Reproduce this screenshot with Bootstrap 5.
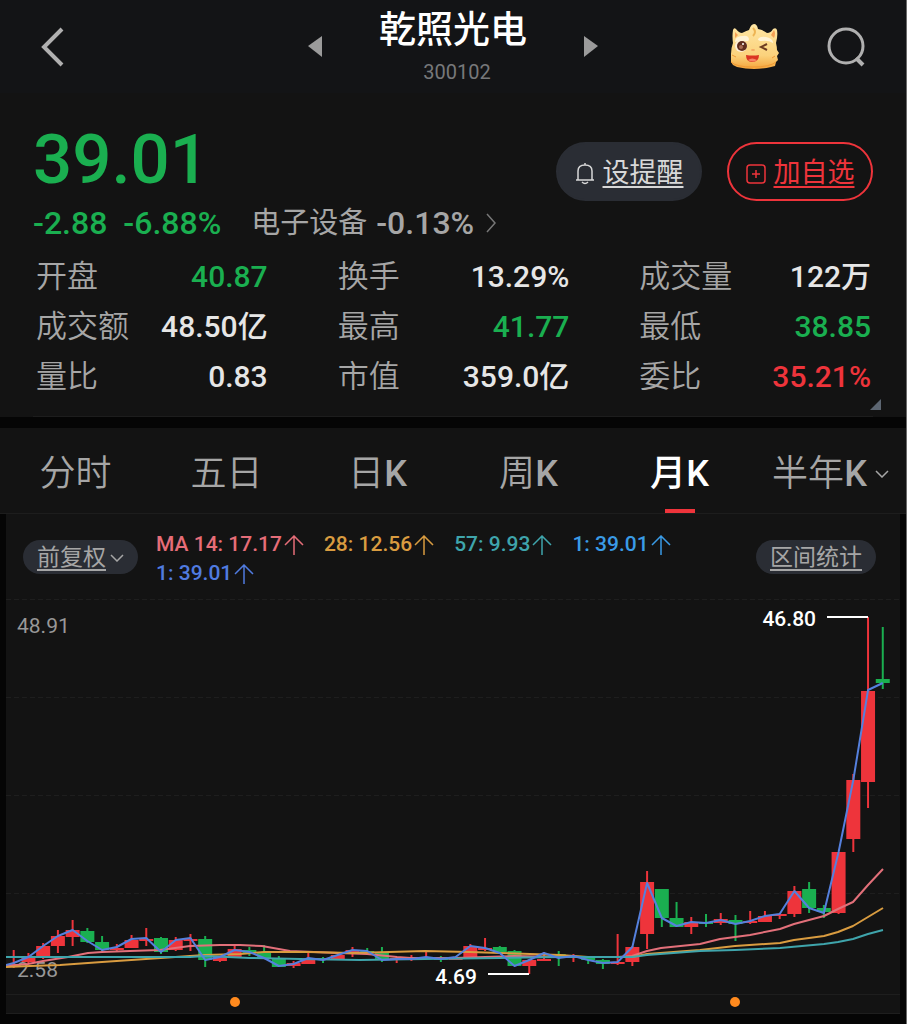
<!DOCTYPE html>
<html lang="zh-CN" data-bs-theme="dark">
<head>
<meta charset="utf-8">
<meta name="viewport" content="width=device-width, initial-scale=1">
<title>乾照光电 300102</title>
<link href="https://cdn.jsdelivr.net/npm/bootstrap@5.3.0/dist/css/bootstrap.min.css" rel="stylesheet">
<style>
  :root { --up:#ee343b; --down:#1aaf50; --muted:#a6a6a6; --panel:#131313; --pill:#2a2d34; }
  body { background:#050505; color:#e6e6e6; font-family:Roboto,"Noto Sans CJK SC",sans-serif; border-right:1px solid #6b6b6b; min-height:100vh; }
  button { color:inherit; font-family:inherit; }
  svg { display:block; }
  .plain { background:none; border:0; padding:0; }
  .up { color:var(--up); } .down { color:var(--down); }
  .topbar { background:#131416; display:grid; grid-template-columns:1fr auto 1fr; align-items:center; height:93px; padding:0 41px; }
  .back { width:24px; }
  .switcher { gap:57px; }
  .stock-name { font-size:37px; line-height:44px; font-weight:500; color:#fff; margin:0; }
  .stock-code { font-size:20px; line-height:26px; color:#77787a; padding:6px 0 0 8px; }
  .quote { background:var(--panel); padding:32px 33px 0 33px; }
  .price { font-size:69px; line-height:70px; font-weight:500; }
  .actions { gap:25px; margin-top:17px; }
  .action { width:146px; height:59px; border-radius:30px; font-size:27px; gap:8px; border:2px solid transparent; padding:4px 0 0; }
  .action-remind { background:var(--pill); color:#d8d8d8; border-color:var(--pill); }
  .action-add { background:transparent; color:var(--up); border-color:var(--up); }
  .lined { text-decoration:underline; text-decoration-thickness:2px; text-underline-offset:4px; }
  .change { font-size:32px; line-height:40px; font-weight:500; padding-top:2px; }
  .change a { color:var(--muted); gap:9px; margin-left:30px; }
  .sector { font-size:29px; font-weight:400; }
  .change-rate { margin-right:3px; }
  .stats { display:grid; grid-template-columns:repeat(3,1fr); column-gap:70px; font-size:31px; line-height:50px; padding:9px 2px 14px 3px; margin:0; border-bottom:1px solid #1d1d1d; position:relative; }
  .stats dt { font-weight:350; color:var(--muted); }
  .stats dd { margin:0; font-weight:500; font-size:30px; }
  .fold { position:absolute; right:-8px; bottom:6px; }
  .periods { background:var(--panel); margin-top:11px; height:86px; border-bottom:1px solid #1d1d1d; }
  .periods button { font-size:36px; font-weight:350; color:var(--muted); position:relative; padding-top:6px; }
  .periods b { font-weight:500; }
  .periods .chosen { font-weight:500; color:#fff; }
  .periods .chosen::after { content:""; position:absolute; left:50%; bottom:0; width:30px; height:4px; margin-left:-15px; background:var(--up); }
  .chart-panel { background:var(--panel); margin:0 6px; }
  .legend-row { padding:16px 24px 0 17px; height:76px; }
  .pill { background:var(--pill); color:var(--muted); border-radius:17px; height:34px; font-size:23px; margin-top:10px; gap:4px; border:0; padding:2px 14px 0; }
  .ma { font-size:21px; line-height:29px; font-weight:500; column-gap:20px; margin-left:18px; }
  .ma span { display:flex; align-items:center; gap:2px; white-space:nowrap; }
  .axis { font-size:21px; fill:#989898; } .mark-text { font-size:21px; font-weight:500; fill:#fff; }
</style>
</head>
<body>
<header class="topbar">
  <button class="plain back" aria-label="返回"><svg width="24" height="40" viewBox="0 0 24 40" fill="none" stroke="#b0b0b0" stroke-width="4"><path d="M21 2 3 20l18 18"/></svg></button>
  <div class="switcher d-flex align-items-center">
    <button class="plain" aria-label="上一只"><svg width="14" height="21" viewBox="0 0 14 21"><path d="M14 0v21L0 10z" fill="#9b9b9b"/></svg></button>
    <div class="text-center">
      <h1 class="stock-name">乾照光电</h1>
      <div class="stock-code">300102</div>
    </div>
    <button class="plain" aria-label="下一只"><svg width="14" height="21" viewBox="0 0 14 21"><path d="M0 0v21l14-11z" fill="#9b9b9b"/></svg></button>
  </div>
  <div class="d-flex justify-content-end align-items-center gap-5">
    <button class="plain" aria-label="助手">
      <svg width="50" height="46" viewBox="0 0 50 46">
        <defs><linearGradient id="skin" x1="0" y1="0" x2="0" y2="1"><stop offset="0" stop-color="#ffe6a4"/><stop offset=".7" stop-color="#fbd27c"/><stop offset="1" stop-color="#f5a53b"/></linearGradient></defs>
        <path d="M4 19Q3 12 4 6q1-3 3-1 3 4 6 4 4-2 7-3Q22 0 25 0t4 5q5 1 9 4 4 0 6-4 3-2 4 1 1 6-1 13 1 4 1 7l2 3-2 3 1 4-2 2-1 4-4 1q-17 4-34 0l-4-2-2-3 0-8q0-6 2-11z" fill="url(#skin)"/>
        <path d="m42 11 3-5q2 3 0 8zM6 8l3 3-3 3z" fill="#f6a055"/>
        <path d="M6 17q1-5 8-5 5-1 6 3 0 3-3 2-6-1-11 1zM29 15q2-3 8-2 6 1 7 5v1q-5-3-11-2-4 0-4-2z" fill="#fff3d6"/>
        <path d="M24 4q4 4 0 8" fill="none" stroke="#eeb454" stroke-width="2"/>
        <circle cx="12" cy="22" r="6" fill="#fff0d8"/><circle cx="13" cy="22" r="5" fill="#5f2c1d"/><circle cx="12" cy="23" r="2" fill="#a76b52"/><circle cx="14" cy="20" r="1" fill="#fff"/>
        <path d="m38 20-6 3 6 3" fill="none" stroke="#6d3b20" stroke-width="2"/>
        <ellipse cx="24" cy="26" rx="2" ry="1" fill="#f3aa64"/>
        <path d="M17 31q7 1 13 0 0 7-7 7-6 0-6-7z" fill="#da3421"/><path d="M19 36q4-3 9 0-4 3-9 0z" fill="#f58464"/>
        <path d="M2 38q5 5 22 5t23-5M3 31l4 2M46 32l-3 2" fill="none" stroke="#f09a35" stroke-width="1"/>
      </svg></button>
    <button class="plain" aria-label="搜索"><svg width="38" height="40" viewBox="0 0 38 40" fill="none" stroke="#b0b0b0" stroke-width="3"><circle cx="19" cy="19" r="17"/><path d="m29 31 7 7" stroke-width="4"/></svg></button>
  </div>
</header>

<main>
<section class="quote">
  <div class="d-flex justify-content-between align-items-start">
    <div class="price down">39.01</div>
    <div class="actions d-flex">
      <button class="action action-remind d-flex align-items-center justify-content-center"><svg width="20" height="22" viewBox="0 0 20 22" fill="none" stroke="currentColor" stroke-width="1.5"><path d="M1 17h18M3 17V8q0-6 7-6t7 6v9M7 19q3 3 6 0M10 0v2"/></svg><span class="lined">设提醒</span></button>
      <button class="action action-add d-flex align-items-center justify-content-center"><svg width="20" height="20" viewBox="0 0 20 20" fill="none" stroke="currentColor" stroke-width="1.5"><rect x="1" y="1" width="18" height="18" rx="3"/><path d="M6 10h8M10 6v8"/></svg><span class="lined">加自选</span></button>
    </div>
  </div>
  <div class="change d-flex align-items-center">
    <span class="down">-2.88</span><span class="down ms-3">-6.88%</span>
    <a href="#" class="d-flex align-items-center text-decoration-none"><span class="sector">电子设备</span><span class="change-rate">-0.13%</span><svg width="10" height="20" viewBox="0 0 10 20" fill="none" stroke="#777" stroke-width="1.5"><path d="m1 1 8 9-8 9"/></svg></a>
  </div>
  <dl class="stats">
    <div class="d-flex justify-content-between"><dt>开盘</dt><dd class="down">40.87</dd></div>
    <div class="d-flex justify-content-between"><dt>换手</dt><dd>13.29%</dd></div>
    <div class="d-flex justify-content-between"><dt>成交量</dt><dd>122万</dd></div>
    <div class="d-flex justify-content-between"><dt>成交额</dt><dd>48.50亿</dd></div>
    <div class="d-flex justify-content-between"><dt>最高</dt><dd class="down">41.77</dd></div>
    <div class="d-flex justify-content-between"><dt>最低</dt><dd class="down">38.85</dd></div>
    <div class="d-flex justify-content-between"><dt>量比</dt><dd>0.83</dd></div>
    <div class="d-flex justify-content-between"><dt>市值</dt><dd>359.0亿</dd></div>
    <div class="d-flex justify-content-between"><dt>委比</dt><dd class="up">35.21%</dd></div>
    <svg class="fold" width="11" height="11" viewBox="0 0 11 11"><path d="M11 0v11H0z" fill="#5d6672"/></svg>
  </dl>
</section>

<nav class="periods d-flex" aria-label="周期">
  <button class="plain flex-fill w-100">分时</button>
  <button class="plain flex-fill w-100">五日</button>
  <button class="plain flex-fill w-100">日<b>K</b></button>
  <button class="plain flex-fill w-100">周<b>K</b></button>
  <button class="plain flex-fill w-100 chosen">月<b>K</b></button>
  <button class="plain flex-fill w-100 d-flex align-items-center justify-content-center gap-2"><span>半年<b>K</b></span><svg width="14" height="8" viewBox="0 0 14 8" fill="none" stroke="currentColor" stroke-width="1.5"><path d="m1 1 6 6 6-6"/></svg></button>
</nav>

<section class="chart-panel">
  <div class="legend-row d-flex align-items-start">
    <button class="pill d-flex align-items-center flex-shrink-0"><span class="lined">前复权</span><svg width="14" height="8" viewBox="0 0 14 8" fill="none" stroke="currentColor" stroke-width="1.5"><path d="m1 1 6 6 6-6"/></svg></button>
    <div class="ma d-flex flex-wrap flex-grow-1" id="ma"></div>
    <button class="pill d-flex align-items-center flex-shrink-0"><span class="lined">区间统计</span></button>
  </div>
  <svg id="chart" class="w-100" viewBox="6 590 894 424" role="img" aria-label="月K线图"></svg>
</section>
</main>

<script src="https://cdn.jsdelivr.net/npm/bootstrap@5.3.0/dist/js/bootstrap.bundle.min.js"></script>
<script>
const RED = '#ee343b', GREEN = '#1aaf50';

// moving-average legend
document.getElementById('ma').innerHTML = [
  ['MA 14: 17.17', '#e66d78'], ['28: 12.56', '#d99c40'], ['57: 9.93', '#3fa5ac'], ['1: 39.01', '#3a9be6'], ['1: 39.01', '#507be0']
].map(([t, c]) => `<span style="color:${c}">${t}<svg width="20" height="20" viewBox="0 0 20 20" fill="none" stroke="currentColor" stroke-width="1.5"><path d="M10 20V1M1 10l9-9 9 9"/></svg></span>`).join('');

// candles: colour, high, body top, body bottom, low
const candles = `r950,964,966,968 r953,957,962,964 r943,946,956,959 r930,936,946,953 r920,930,937,946 g928,931,942,943 g936,942,950,951
r944,948,950,951 r935,940,948,948 r928,939,940,946 g937,938,952,954 r937,940,950,951 r934,939,940,951 g936,939,960,967 r956,957,961,962
r945,949,957,958 g947,950,953,956 g945,953,958,959 g956,958,967,967 r961,963,966,968 r953,959,964,964 g957,958,960,963 r955,955,960,960
r947,950,952,957 g948,951,952,953 g947,953,960,962 r957,958,960,963 r955,958,960,961 r951,957,958,959 g956,958,959,962 r957,958,959,960
r944,946,957,957 r938,948,949,951 g946,947,952,953 g950,951,966,966 r959,960,966,974 r952,959,960,961 g951,954,955,966 r954,956,958,962
g956,957,960,964 g959,960,964,969 r934,962,964,965 r946,947,962,966 r871,882,934,949 g889,889,918,927 g902,918,927,927 r917,922,927,934
g914,922,924,927 r913,919,923,925 g915,920,924,941 r911,921,923,924 r911,916,922,922 r913,914,916,919 r886,891,914,917 g882,889,908,913
g905,908,912,918 r852,852,913,914 r774,780,839,852 r617,691,782,808 g627,679,683,689`.split(/\s+/);
const xAt = i => 13.7 + i * 14.73;

const closes = [963,957,946,936,930,941,950,947,939,938,952,940,938,960,957,950,952,958,966,964,958,960,955,950,951,960,959,959,957,959,957,946,948,953,966,960,953,958,956,960,963,962,947,883,918,926,922,923,920,924,921,916,914,891,908,913,852,780,690,683];
const ma14 = '6,966 28,964 43,961 68,957 88,953 102,952 130,951 160,950 190,946 220,945 240,945 262,946 290,951 338,953 367,954 397,957 411,958 455,958 485,957 514,956 560,957 618,957 632,956 647,951 661,948 700,944 720,939 750,935 780,929 794,924 824,916 838,909 853,902 868,885 883,869';
const ma28 = '6,967 30,966 60,965 102,962 146,959 190,956 205,955 240,954 264,952 308,952 353,953 425,951 470,952 500,953 560,955 588,957 632,957 647,954 700,950 735,946 780,943 794,940 824,936 838,932 853,926 868,917 883,908';
const ma57 = '6,957 190,957 205,956 250,958 300,959 360,960 425,959 500,958 560,957 632,957 647,955 700,951 735,950 780,948 824,944 838,942 853,939 868,934 883,930';

let s = '';
for (const y of [599, 697, 795, 893]) s += `<path d="M6 ${y}.5H900" stroke="#1e1e1e" stroke-dasharray="5 3"/>`;
for (const y of [994, 1013]) s += `<path d="M6 ${y}.5H900" stroke="#1e1e1e"/>`;
s += `<text class="axis" x="17" y="633">48.91</text>`;
candles.forEach((c, i) => {
  const col = c[0] === 'r' ? RED : GREEN, [h, t, b, l] = c.slice(1).split(',').map(Number), x = xAt(i);
  s += `<path d="M${x} ${h}V${l}" stroke="${col}" stroke-width="2"/><rect x="${x - 7}" y="${t}" width="14" height="${Math.max(2, b - t)}" fill="${col}"/>`;
});
s += `<text class="axis" x="17" y="977">2.58</text>`;
const line = (p, c) => `<polyline points="${p}" fill="none" stroke="${c}" stroke-width="2" stroke-linejoin="round"/>`;
s += line(ma14, '#e3707a') + line(ma28, '#d99c40') + line(ma57, '#3fa5ac');
s += line('6,965 ' + closes.map((y, i) => `${xAt(i)},${y}`).join(' '), '#5580dd');
s += `<path d="M827 617H868M488 974H529" stroke="#fff" stroke-width="2"/>`;
s += `<text class="mark-text" x="816" y="626" text-anchor="end">46.80</text><text class="mark-text" x="477" y="984" text-anchor="end">4.69</text>`;
s += `<circle cx="235" cy="1002" r="5" fill="#ff8a1e"/><circle cx="735" cy="1002" r="5" fill="#ff8a1e"/>`;
document.getElementById('chart').innerHTML = s;
</script>
</body>
</html>
